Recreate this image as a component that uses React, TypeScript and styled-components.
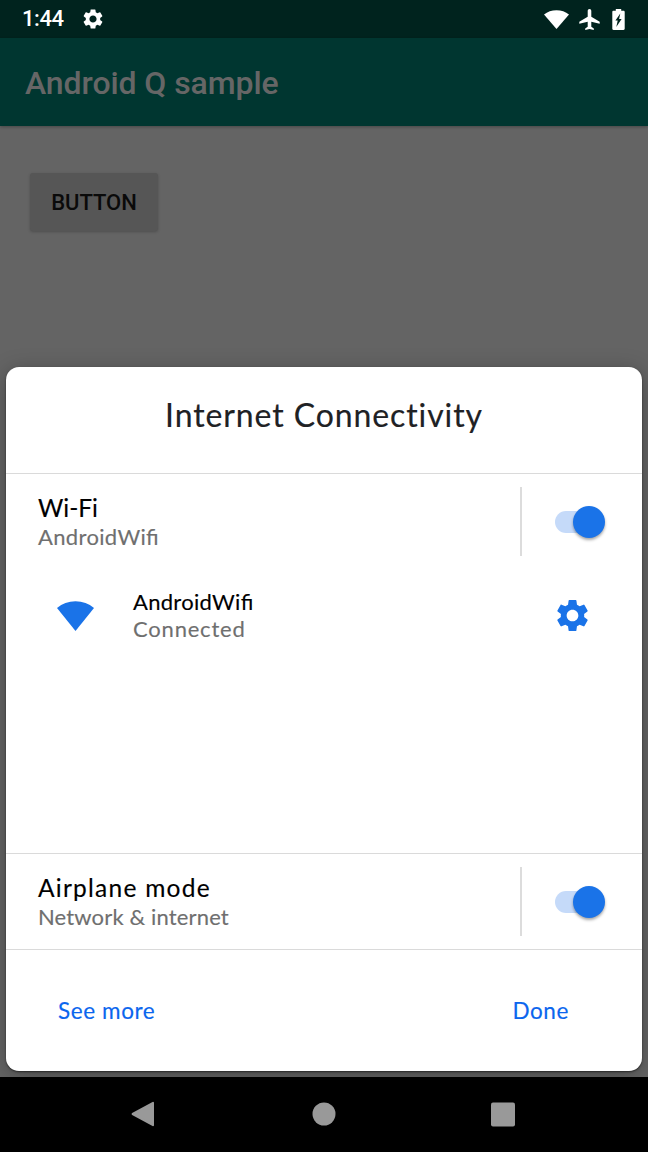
import React from 'react';
import styled, { createGlobalStyle } from 'styled-components';
import { MdSettings } from 'react-icons/md';

const GlobalStyle = createGlobalStyle`
  * { box-sizing: border-box; }
  body { margin: 0; background: #000; }
  button { font: inherit; border: 0; padding: 0; background: none; }
`;

const Screen = styled.div`
  width: 648px;
  height: 1152px;
  display: flex;
  flex-direction: column;
  overflow: hidden;
  background: #646464;
  font-family: Lato, 'Liberation Sans', sans-serif;
`;

const StatusBar = styled.header`
  height: 38px;
  flex: none;
  display: flex;
  align-items: center;
  justify-content: space-between;
  padding: 0 22px 0 22px;
  background: #00231e;
  color: #fff;
`;

const StatusGroup = styled.div<{ $gap: number }>`
  display: flex;
  align-items: center;
  gap: ${({ $gap }) => $gap}px;
  svg { display: block; }
`;

const Clock = styled.span`
  width: 43px;
  font-size: 22px;
  font-weight: 500;
  line-height: 38px;
  white-space: nowrap;
  font-family: Roboto, sans-serif;
  letter-spacing: -0.4px;
`;

const AppBar = styled.div`
  height: 88px;
  flex: none;
  padding-left: 25px;
  background: #003630;
  box-shadow: 0 1px 3px rgba(0, 0, 0, 0.3);
  color: #666;
  font: 500 32px/90px Roboto, sans-serif;
  letter-spacing: -0.08px;
`;

const Content = styled.main`
  flex: 1;
  display: flex;
  flex-direction: column;
  justify-content: space-between;
  padding: 47px 6px 6px;
`;

const RaisedButton = styled.button`
  && {
    width: 128px;
    height: 58px;
    margin-left: 24px;
    padding-top: 1px;
    border-radius: 3px;
    background: #565656;
    box-shadow: 0 1px 3px rgba(0, 0, 0, 0.22);
    color: #0a0a0a;
    font: 500 22px/57px Roboto, sans-serif;
  }
`;

const Sheet = styled.section`
  height: 704px;
  display: flex;
  flex-direction: column;
  border-radius: 13px;
  background: #fff;
  box-shadow: 0 1px 2px rgba(0, 0, 0, 0.55), 0 4px 22px rgba(0, 0, 0, 0.28);
  -webkit-text-stroke: 0.15px currentColor;
  font-feature-settings: 'liga' 1;
`;

const SheetTitle = styled.h1`
  height: 106px;
  margin: 0;
  text-align: center;
  color: #202124;
  font-size: 32px;
  font-weight: 400;
  line-height: 96px;
  letter-spacing: 0.9px;
  font-feature-settings: 'liga' 0;
`;

const SettingRow = styled.div`
  height: 96px;
  flex: none;
  display: flex;
  align-items: center;
  border-top: 1px solid #dadada;
  padding: 0 37px 0 32px;
`;

const TextBlock = styled.div`
  flex: 1;
  white-space: nowrap;
`;

const Primary = styled.div<{ $small?: boolean; $spacing: number }>`
  color: #000;
  font-size: ${({ $small }) => ($small ? 22 : 24.5)}px;
  line-height: ${({ $small }) => ($small ? 26 : 30)}px;
  letter-spacing: ${({ $spacing }) => $spacing}px;
`;

const Secondary = styled.div<{ $spacing: number }>`
  color: #6f6f6f;
  font-size: 22px;
  line-height: 28px;
  letter-spacing: ${({ $spacing }) => $spacing}px;
`;

const Divider = styled.div`
  width: 2px;
  height: 69px;
  margin-right: 33px;
  background: #dcdcdc;
`;

const Switch = styled.div`
  width: 50px;
  height: 32px;
  display: flex;
  align-items: center;
`;

const Track = styled.div`
  width: 42px;
  height: 22px;
  margin-right: -24px;
  border-radius: 11px;
  background: #c5daf9;
`;

const Thumb = styled.div`
  flex: none;
  width: 32px;
  height: 32px;
  border-radius: 50%;
  background: #1a73e8;
  box-shadow: 0 2px 3px rgba(0, 0, 0, 0.35);
`;

const NetworkRow = styled.div`
  height: 93px;
  flex: none;
  display: flex;
  align-items: center;
  padding: 0 50px 0 51px;
  svg { display: block; }
`;

const NetworkText = styled(TextBlock)`
  margin-left: 39px;
`;

const Spacer = styled.div`
  flex: 1;
`;

const Actions = styled.footer`
  height: 122px;
  display: flex;
  justify-content: space-between;
  padding: 0 73px 0 52px;
  border-top: 1px solid #dadada;
`;

const TextButton = styled.button`
  && {
    color: #0b66ee;
    font-size: 22.5px;
    line-height: 119px;
    letter-spacing: 0.6px;
  }
`;

const NavBar = styled.nav`
  height: 75px;
  flex: none;
  display: flex;
  align-items: center;
  justify-content: space-between;
  padding: 0 132px 1px 131px;
  background: #000;
  svg { display: block; }
`;

const WifiFan = ({ width, height, color }: { width: number; height: number; color: string }) => (
  <svg width={width} height={height} viewBox="0 0 37 30" preserveAspectRatio="none" fill={color}>
    <path d="M18.5 30L0 7Q7.8 0.3 18.5 0.3T37 7Z" />
  </svg>
);

const Plane = () => (
  <svg width="21" height="21" viewBox="0 0 21 21" fill="#fff">
    <path d="M10.5 0c1.1 0 1.8.8 1.8 1.9v5.8l8.4 5v2l-8.4-2v5l2.500 1.700V21l-4.300-.9L6.200 21v-1.600l2.500-1.700v-5l-8.400 2v-2l8.400-5V1.900C8.700.8 9.400 0 10.500 0z" />
  </svg>
);

const Battery = () => (
  <svg width="14" height="21" viewBox="0 0 14 21">
    <path fill="#fff" d="M3.800 0h5.400v1.800h2.300c.7 0 1.200.5 1.200 1.200v16.800c0 .7-.5 1.200-1.200 1.200H1.500c-.7 0-1.200-.5-1.200-1.200V3c0-.7.500-1.200 1.200-1.200h2.300z" />
    <path fill="#00231e" d="M8.300 4.500L3.400 11.500h2.300L4.300 18L9.600 10H7.100z" />
  </svg>
);

const Toggle = () => (
  <Switch role="switch" aria-checked="true">
    <Track />
    <Thumb />
  </Switch>
);

export default function App() {
  return (
    <Screen>
      <GlobalStyle />
      <StatusBar>
        <StatusGroup $gap={16}>
          <Clock>1:44</Clock>
          <MdSettings size={24} />
        </StatusGroup>
        <StatusGroup $gap={12}>
          <StatusGroup $gap={10}>
            <WifiFan width={25} height={19} color="#fff" />
            <Plane />
          </StatusGroup>
          <Battery />
        </StatusGroup>
      </StatusBar>
      <AppBar>Android Q sample</AppBar>
      <Content>
        <RaisedButton>BUTTON</RaisedButton>
        <Sheet>
          <SheetTitle>Internet Connectivity</SheetTitle>
          <SettingRow>
            <TextBlock>
              <Primary $spacing={0}>Wi-Fi</Primary>
              <Secondary $spacing={0.35}>AndroidWifi</Secondary>
            </TextBlock>
            <Divider />
            <Toggle />
          </SettingRow>
          <NetworkRow>
            <WifiFan width={37} height={30} color="#1a73e8" />
            <NetworkText>
              <Primary $small $spacing={0.3}>AndroidWifi</Primary>
              <Secondary $spacing={0.8}>Connected</Secondary>
            </NetworkText>
            <MdSettings size={39} color="#1a73e8" />
          </NetworkRow>
          <Spacer />
          <SettingRow>
            <TextBlock>
              <Primary $spacing={1.25}>Airplane mode</Primary>
              <Secondary $spacing={0.15}>Network &amp; internet</Secondary>
            </TextBlock>
            <Divider />
            <Toggle />
          </SettingRow>
          <Actions>
            <TextButton>See more</TextButton>
            <TextButton>Done</TextButton>
          </Actions>
        </Sheet>
      </Content>
      <NavBar>
        <svg width="24" height="26" viewBox="0 0 24 26">
          <path d="M1.600 13L22 1.800v22.400z" fill="#999" stroke="#999" strokeWidth="2" strokeLinejoin="round" />
        </svg>
        <svg width="26" height="24" viewBox="0 0 26 24">
          <circle cx="14" cy="12" r="11.500" fill="#999" />
        </svg>
        <svg width="26" height="25" viewBox="0 0 26 25">
          <rect x="1" y=".5" width="24" height="24" rx="2" fill="#999" />
        </svg>
      </NavBar>
    </Screen>
  );
}
